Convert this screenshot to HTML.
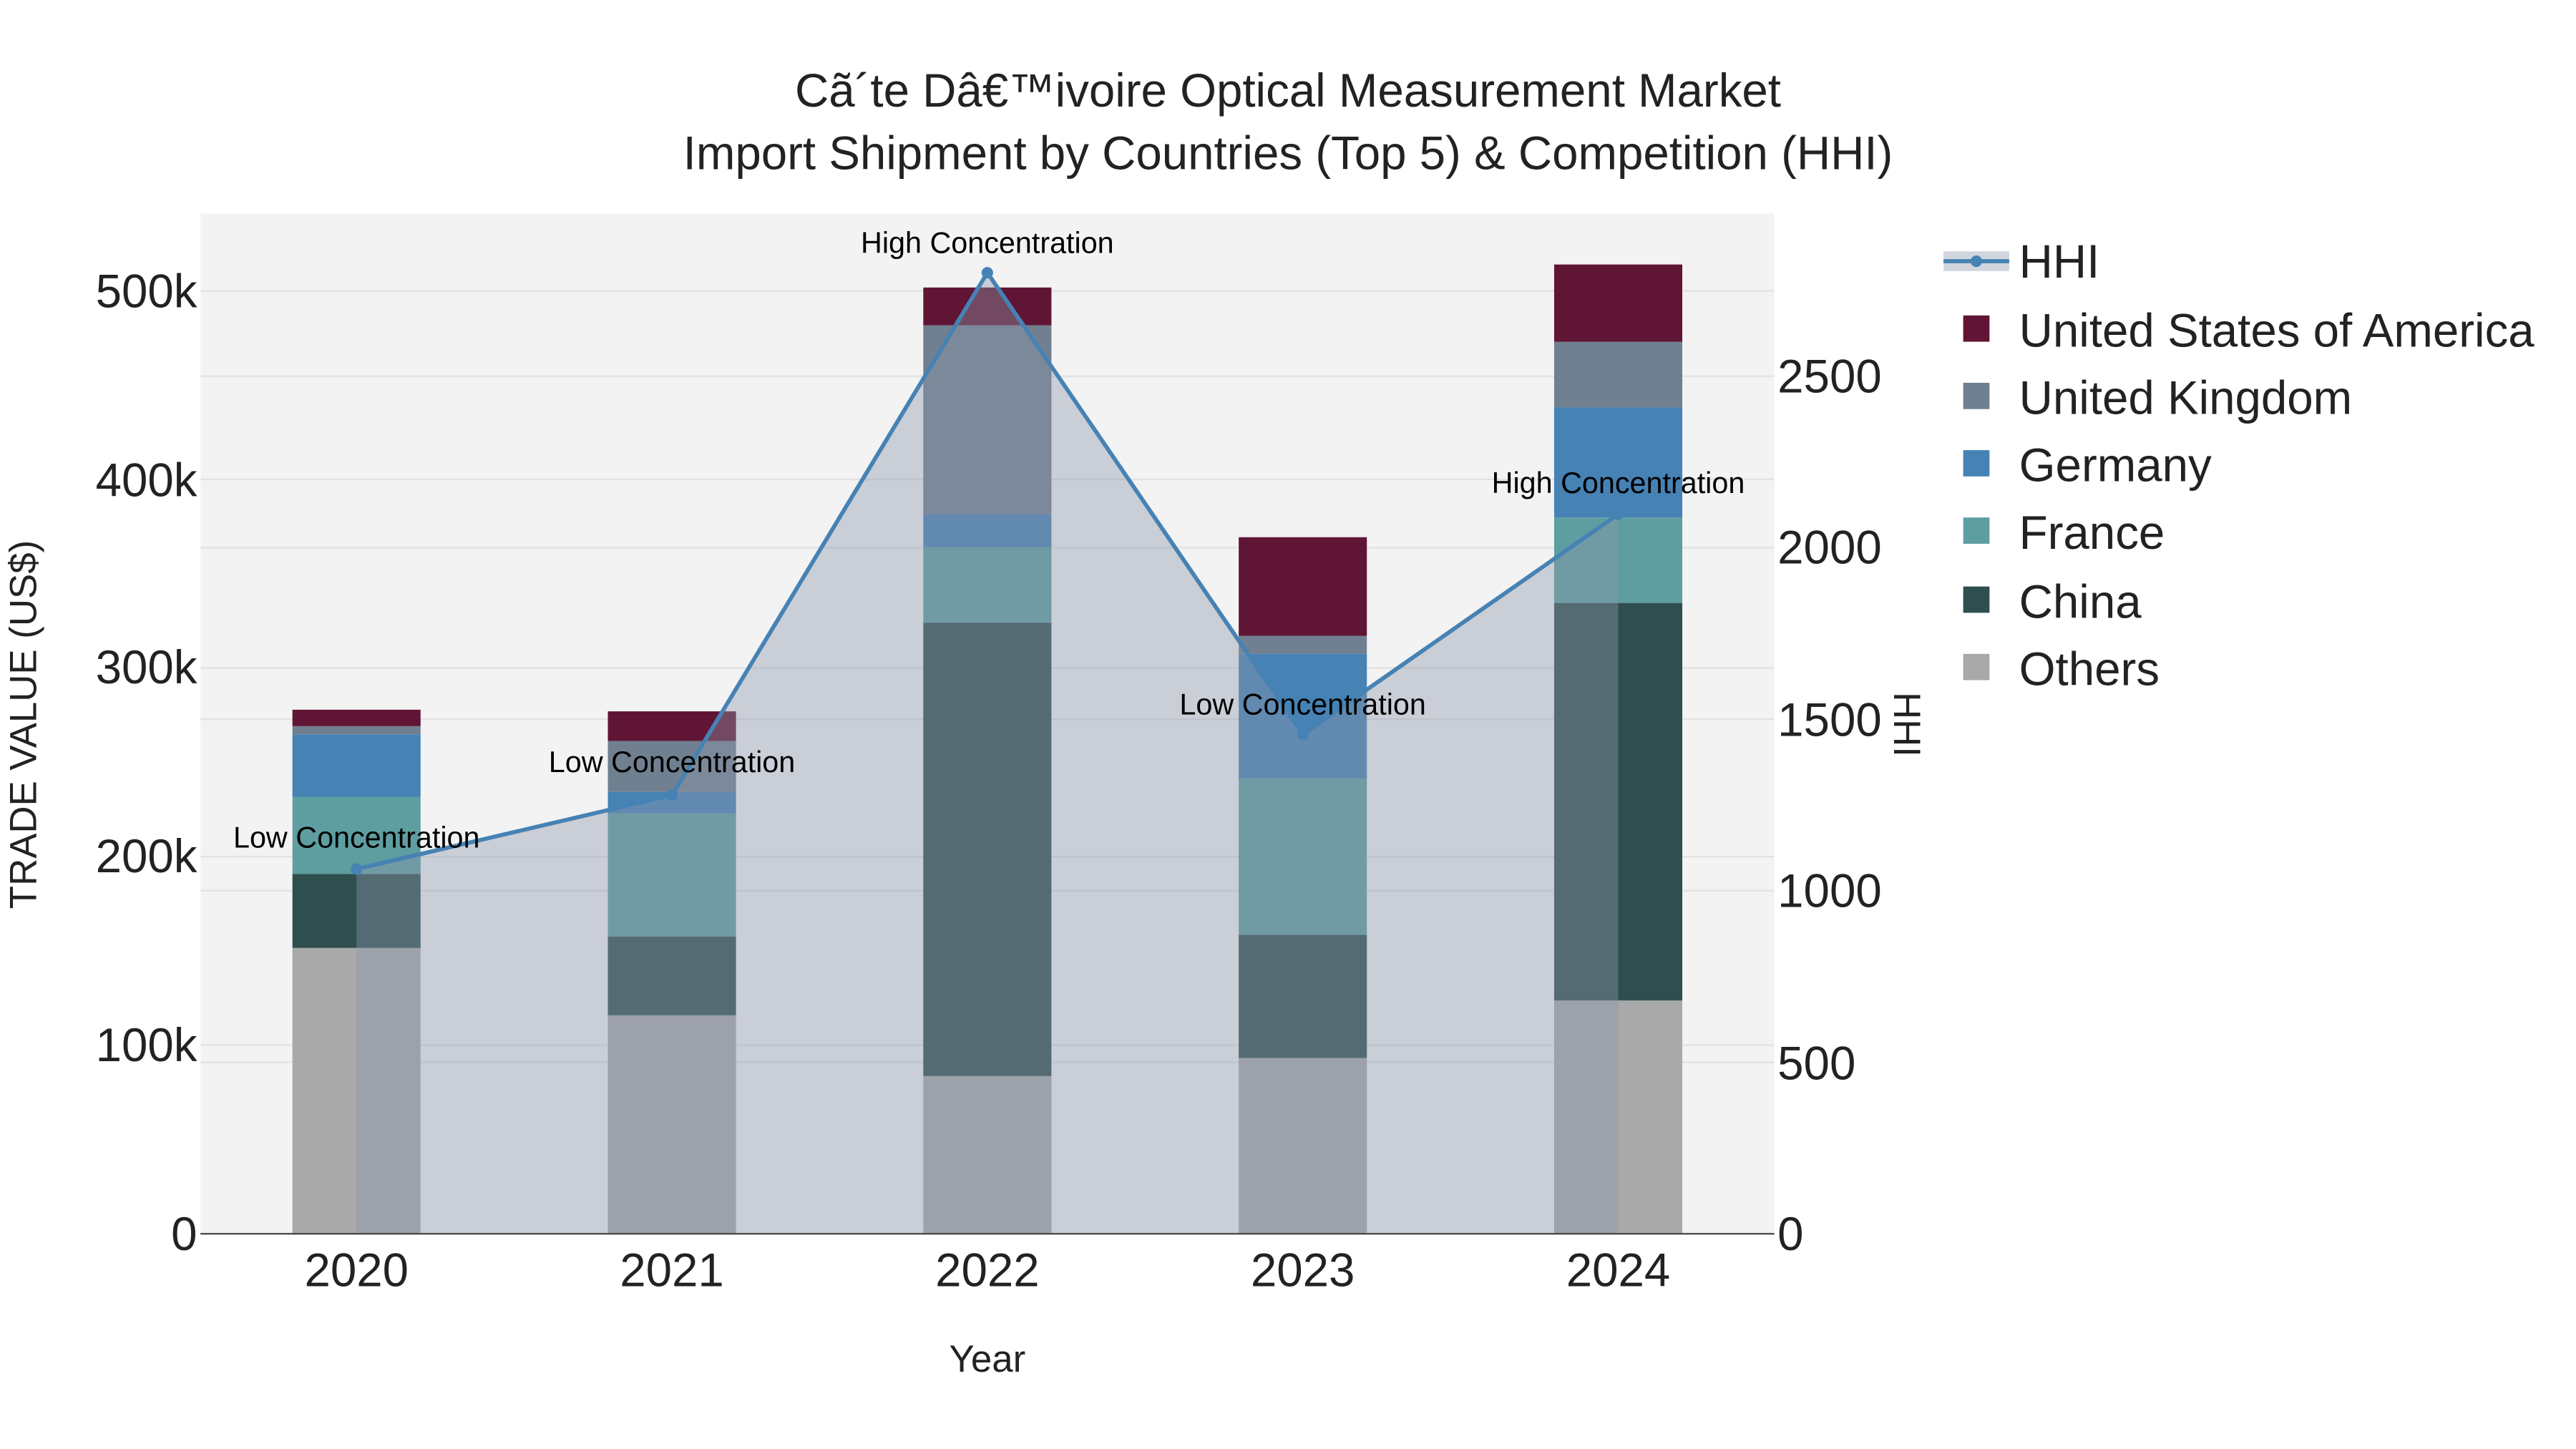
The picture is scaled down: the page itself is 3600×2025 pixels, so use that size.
<!DOCTYPE html>
<html><head><meta charset="utf-8"><style>html,body{margin:0;padding:0;background:#fff}svg{display:block}text{font-family:"Liberation Sans",sans-serif}</style></head><body>
<svg width="3600" height="2025" viewBox="0 0 1568 882" xmlns="http://www.w3.org/2000/svg">
<rect width="1568" height="882" fill="#fff"/>
<rect x="122" y="130" width="958" height="621" fill="#f3f3f3"/>
<g stroke="#e2e2e2" stroke-width="1">
<line x1="122" x2="1080" y1="636.2" y2="636.2"/><line x1="122" x2="1080" y1="521.4" y2="521.4"/><line x1="122" x2="1080" y1="406.6" y2="406.6"/><line x1="122" x2="1080" y1="291.8" y2="291.8"/><line x1="122" x2="1080" y1="177" y2="177"/>
<line x1="122" x2="1080" y1="646.6" y2="646.6"/><line x1="122" x2="1080" y1="542.2" y2="542.2"/><line x1="122" x2="1080" y1="437.8" y2="437.8"/><line x1="122" x2="1080" y1="333.4" y2="333.4"/><line x1="122" x2="1080" y1="229" y2="229"/>
</g>
<g>
<rect x="178" y="577" width="78" height="174" fill="#a9a9a9"/><rect x="178" y="532" width="78" height="45" fill="#2f4f4f"/><rect x="178" y="485" width="78" height="47" fill="#5f9ea0"/><rect x="178" y="447" width="78" height="38" fill="#4682b4"/><rect x="178" y="442" width="78" height="5" fill="#708090"/><rect x="178" y="432" width="78" height="10" fill="#611535"/>
<rect x="370" y="618" width="78" height="133" fill="#a9a9a9"/><rect x="370" y="570" width="78" height="48" fill="#2f4f4f"/><rect x="370" y="495" width="78" height="75" fill="#5f9ea0"/><rect x="370" y="482" width="78" height="13" fill="#4682b4"/><rect x="370" y="451" width="78" height="31" fill="#708090"/><rect x="370" y="433" width="78" height="18" fill="#611535"/>
<rect x="562" y="655" width="78" height="96" fill="#a9a9a9"/><rect x="562" y="379" width="78" height="276" fill="#2f4f4f"/><rect x="562" y="333" width="78" height="46" fill="#5f9ea0"/><rect x="562" y="313" width="78" height="20" fill="#4682b4"/><rect x="562" y="198" width="78" height="115" fill="#708090"/><rect x="562" y="175" width="78" height="23" fill="#611535"/>
<rect x="754" y="644" width="78" height="107" fill="#a9a9a9"/><rect x="754" y="569" width="78" height="75" fill="#2f4f4f"/><rect x="754" y="474" width="78" height="95" fill="#5f9ea0"/><rect x="754" y="398" width="78" height="76" fill="#4682b4"/><rect x="754" y="387" width="78" height="11" fill="#708090"/><rect x="754" y="327" width="78" height="60" fill="#611535"/>
<rect x="946" y="609" width="78" height="142" fill="#a9a9a9"/><rect x="946" y="367" width="78" height="242" fill="#2f4f4f"/><rect x="946" y="315" width="78" height="52" fill="#5f9ea0"/><rect x="946" y="248" width="78" height="67" fill="#4682b4"/><rect x="946" y="208" width="78" height="40" fill="#708090"/><rect x="946" y="161" width="78" height="47" fill="#611535"/>
</g>
<polygon points="217,529 409,484 601,166 793,447 985,313 985,751 217,751" fill="rgba(140,150,170,0.4)"/>
<polyline points="217,529 409,484 601,166 793,447 985,313" fill="none" stroke="#4682b4" stroke-width="2.5"/>
<g fill="#4682b4"><circle cx="217" cy="529" r="3.5"/><circle cx="409" cy="484" r="3.5"/><circle cx="601" cy="166" r="3.5"/><circle cx="793" cy="447" r="3.5"/><circle cx="985" cy="313" r="3.5"/></g>
<line x1="122" x2="1080" y1="751" y2="751" stroke="#444" stroke-width="1"/>
<g font-size="18" fill="#000" text-anchor="middle">
<text x="217" y="516">Low Concentration</text><text x="409" y="470">Low Concentration</text><text x="601" y="154">High Concentration</text><text x="793" y="435">Low Concentration</text><text x="985" y="300">High Concentration</text>
</g>
<g font-size="28.5" fill="#222" text-anchor="end">
<text x="120" y="761">0</text><text x="120" y="646">100k</text><text x="120" y="531">200k</text><text x="120" y="416">300k</text><text x="120" y="302">400k</text><text x="120" y="187">500k</text>
</g>
<g font-size="28.5" fill="#222">
<text x="1082" y="761">0</text><text x="1082" y="657">500</text><text x="1082" y="552">1000</text><text x="1082" y="448">1500</text><text x="1082" y="343">2000</text><text x="1082" y="239">2500</text>
</g>
<g font-size="28.5" fill="#222" text-anchor="middle">
<text x="217" y="783">2020</text><text x="409" y="783">2021</text><text x="601" y="783">2022</text><text x="793" y="783">2023</text><text x="985" y="783">2024</text>
</g>
<text x="601" y="835" font-size="23" fill="#222" text-anchor="middle">Year</text>
<text transform="translate(22,441) rotate(-90)" font-size="23" fill="#222" text-anchor="middle">TRADE VALUE (US$)</text>
<text transform="translate(1153,441) rotate(90)" font-size="23" fill="#222" text-anchor="middle">HHI</text>
<g font-size="28.5" fill="#222" text-anchor="middle">
<text x="784" y="65">Cã´te Dâ€™ivoire Optical Measurement Market</text>
<text x="784" y="103">Import Shipment by Countries (Top 5) &amp; Competition (HHI)</text>
</g>
<g font-size="28.5" fill="#222">
<rect x="1183" y="153" width="40" height="12" fill="rgba(140,150,170,0.4)"/><line x1="1183" x2="1223" y1="159" y2="159" stroke="#4682b4" stroke-width="2.5"/><circle cx="1203" cy="159" r="3.5" fill="#4682b4"/>
<text x="1229" y="169">HHI</text>
<rect x="1195" y="192" width="16" height="16" fill="#611535"/><text x="1229" y="211">United States of America</text>
<rect x="1195" y="233" width="16" height="16" fill="#708090"/><text x="1229" y="252">United Kingdom</text>
<rect x="1195" y="274" width="16" height="16" fill="#4682b4"/><text x="1229" y="293">Germany</text>
<rect x="1195" y="315" width="16" height="16" fill="#5f9ea0"/><text x="1229" y="334">France</text>
<rect x="1195" y="357" width="16" height="16" fill="#2f4f4f"/><text x="1229" y="376">China</text>
<rect x="1195" y="398" width="16" height="16" fill="#a9a9a9"/><text x="1229" y="417">Others</text>
</g>
</svg>
</body></html>
